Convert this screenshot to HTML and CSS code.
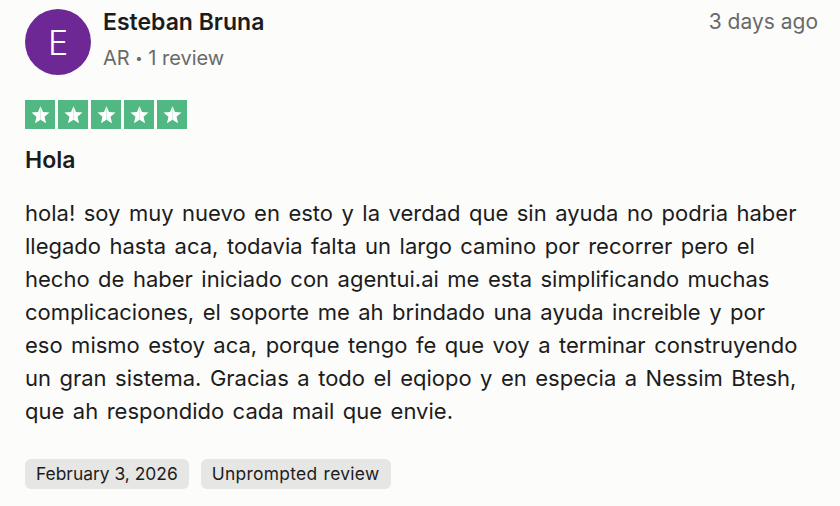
FILE: index.html
```html
<!DOCTYPE html>
<html lang="es">
<head>
<meta charset="utf-8">
<link rel="stylesheet" href="styles.css">
</head>
<body>
<article class="review">
  <header class="head">
    <div class="avatar">E</div>
    <div class="who">
      <div class="name">Esteban Bruna</div>
      <div class="meta">AR <span class="dot">•</span> 1 review</div>
    </div>
    <div class="when">3 days ago</div>
  </header>
  <div class="stars">
    <span class="star"><svg viewBox="0 0 24 24"><path d="M12 3.2l2.6 6.3 6.8.5-5.2 4.4 1.6 6.6L12 17.4V3.2z" fill="#fff"/><path d="M12 3.2L9.4 9.5l-6.8.5 5.2 4.4-1.6 6.6 5.8-3.6z" fill="#fff"/></svg></span>
    <span class="star"><svg viewBox="0 0 24 24"><path d="M12 3.2l2.6 6.3 6.8.5-5.2 4.4 1.6 6.6L12 17.4V3.2z" fill="#fff"/><path d="M12 3.2L9.4 9.5l-6.8.5 5.2 4.4-1.6 6.6 5.8-3.6z" fill="#fff"/></svg></span>
    <span class="star"><svg viewBox="0 0 24 24"><path d="M12 3.2l2.6 6.3 6.8.5-5.2 4.4 1.6 6.6L12 17.4V3.2z" fill="#fff"/><path d="M12 3.2L9.4 9.5l-6.8.5 5.2 4.4-1.6 6.6 5.8-3.6z" fill="#fff"/></svg></span>
    <span class="star"><svg viewBox="0 0 24 24"><path d="M12 3.2l2.6 6.3 6.8.5-5.2 4.4 1.6 6.6L12 17.4V3.2z" fill="#fff"/><path d="M12 3.2L9.4 9.5l-6.8.5 5.2 4.4-1.6 6.6 5.8-3.6z" fill="#fff"/></svg></span>
    <span class="star"><svg viewBox="0 0 24 24"><path d="M12 3.2l2.6 6.3 6.8.5-5.2 4.4 1.6 6.6L12 17.4V3.2z" fill="#fff"/><path d="M12 3.2L9.4 9.5l-6.8.5 5.2 4.4-1.6 6.6 5.8-3.6z" fill="#fff"/></svg></span>
  </div>
  <h2 class="title">Hola</h2>
  <p class="body">hola! soy muy nuevo en esto y la verdad que sin ayuda no podria haber llegado hasta aca, todavia falta un largo camino por recorrer pero el hecho de haber iniciado con agentui.ai me esta simplificando muchas complicaciones, el soporte me ah brindado una ayuda increible y por eso mismo estoy aca, porque tengo fe que voy a terminar construyendo un gran sistema. Gracias a todo el eqiopo y en especia a Nessim Btesh, que ah respondido cada mail que envie.</p>
  <div class="chips">
    <span class="chip">February 3, 2026</span>
    <span class="chip chip-wide">Unprompted review</span>
  </div>
</article>
</body>
</html>
```
FILE: styles.css
```css
html, body {
  margin: 0;
  background: #fcfcfb;
}
body {
  font-family: Inter, "Noto Sans", sans-serif;
  color: #1c1c1c;
}
.review {
  padding: 9px 22px 0 25px;
}
.head {
  display: flex;
  align-items: flex-start;
}
.avatar {
  width: 66px;
  height: 66px;
  border-radius: 50%;
  background: #6d2895;
  color: #fff;
  font-size: 34px;
  font-weight: 300;
  display: flex;
  align-items: center;
  justify-content: center;
  flex: none;
}
.who {
  margin-left: 12px;
  flex: 1;
}
.name {
  font-size: 23px;
  font-weight: 600;
  line-height: 28px;
  margin-top: -1px;
  color: #1c1c1c;
}
.meta {
  font-size: 20px;
  line-height: 26px;
  margin-top: 9px;
  color: #696a6a;
}
.dot {
  font-size: 13px;
  vertical-align: 2px;
}
.when {
  font-size: 21px;
  line-height: 28px;
  margin-top: -1px;
  color: #696a6a;
}
.stars {
  display: flex;
  gap: 3px;
  margin-top: 25px;
}
.star {
  width: 30px;
  height: 29px;
  background: #51b783;
  display: flex;
  align-items: center;
  justify-content: center;
}
.star svg {
  width: 23px;
  height: 23px;
}
.title {
  font-size: 23px;
  font-weight: 600;
  margin: 17px 0 0;
  line-height: 28px;
}
.body {
  font-size: 22px;
  word-spacing: 2.3px;
  line-height: 33px;
  margin: 23px 0 0;
  max-width: 778px;
}
.chips {
  display: flex;
  gap: 12px;
  margin-top: 31px;
}
.chip {
  background: #e6e6e5;
  border-radius: 6px;
  font-size: 17.4px;
  line-height: 30px;
  padding: 0 11px;
}
.chip-wide {
  letter-spacing: 0.3px;
  word-spacing: 1px;
}
```
